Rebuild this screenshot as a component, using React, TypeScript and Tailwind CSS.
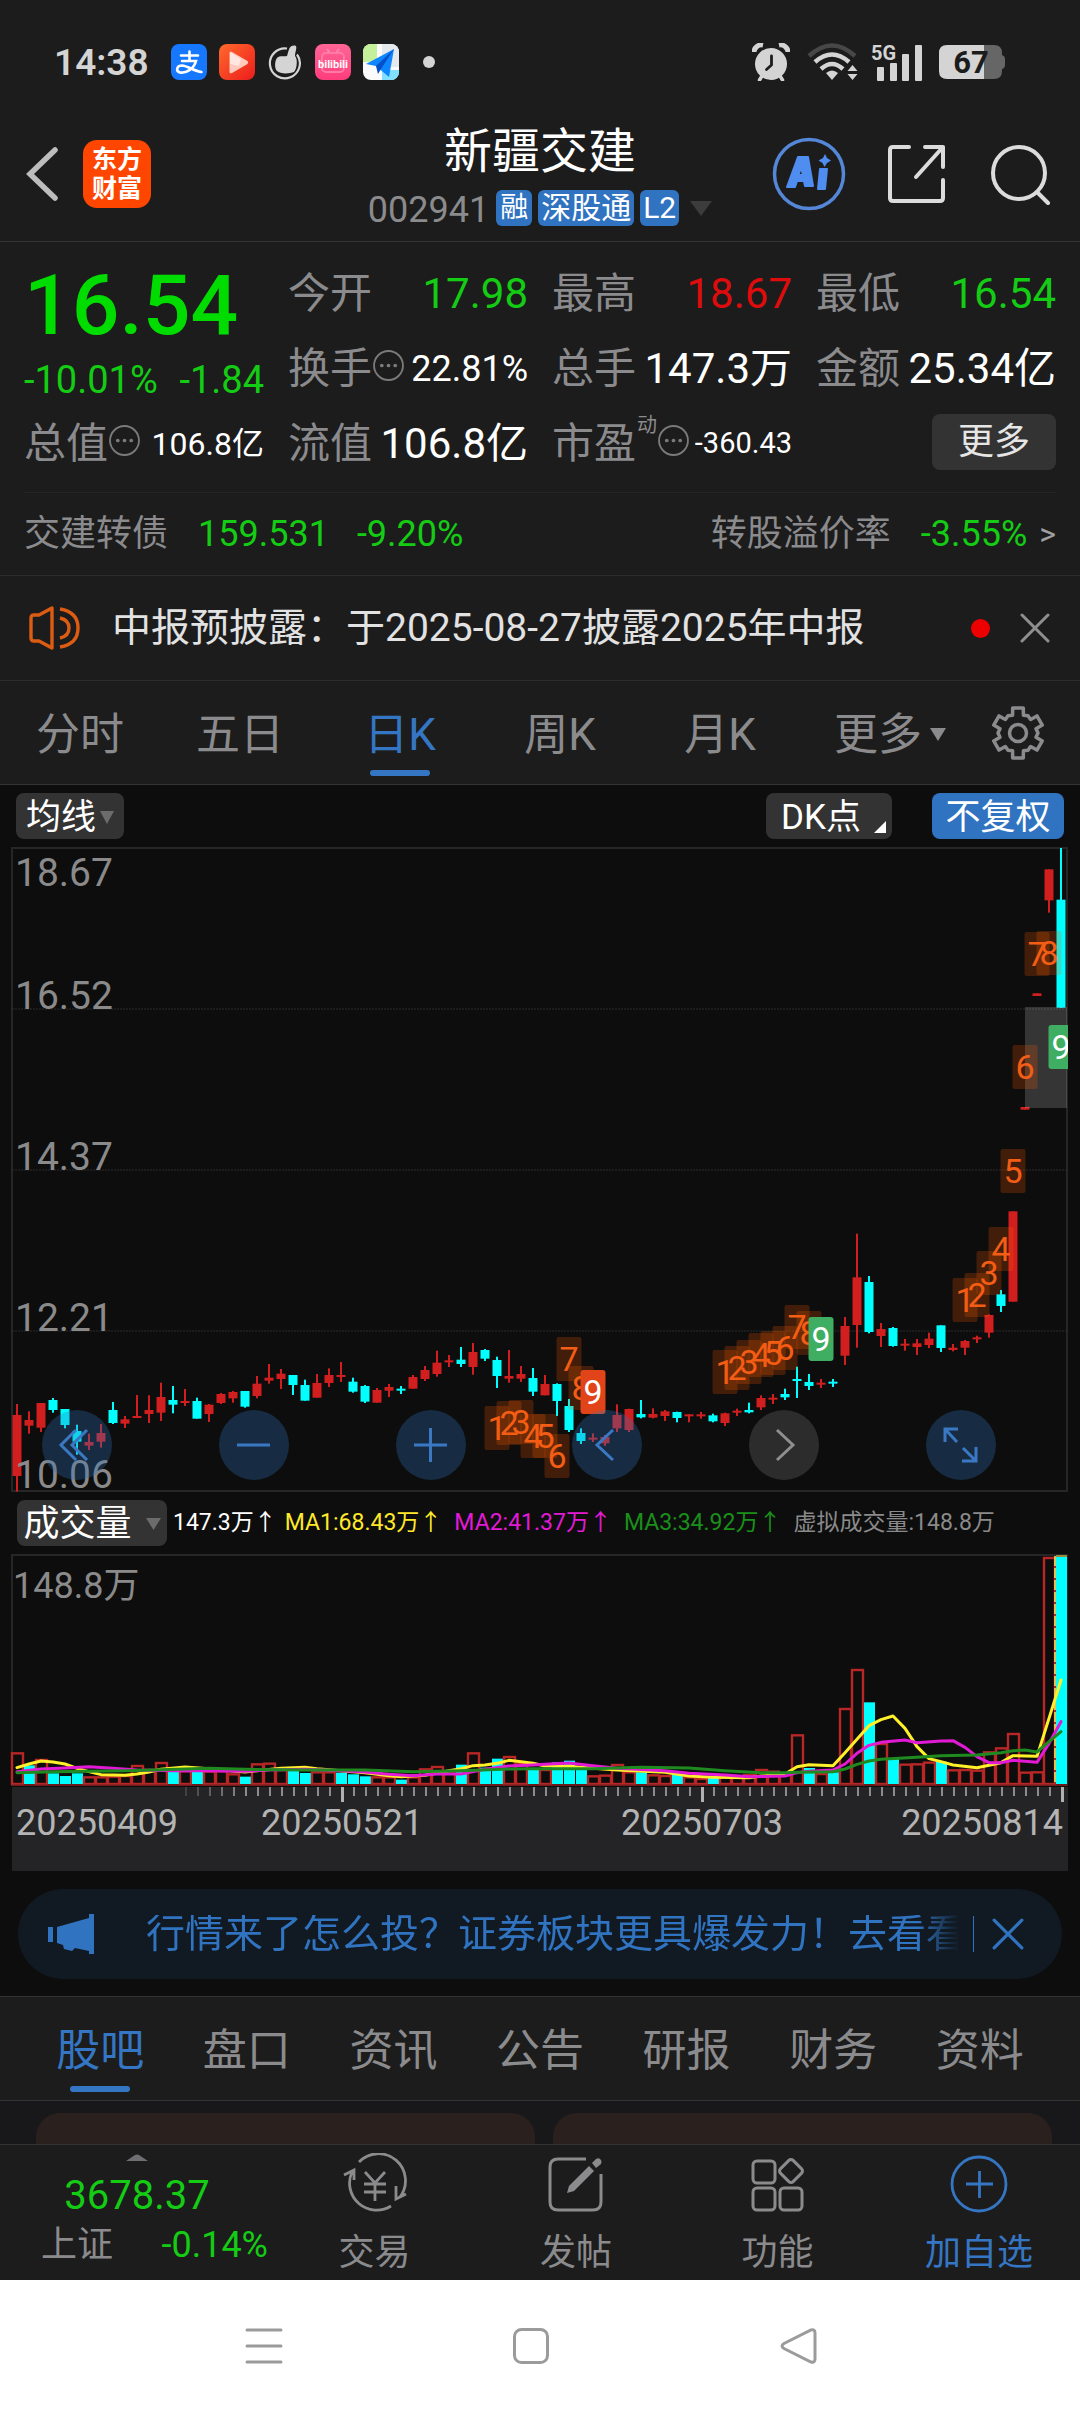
import React from "react";

/* ---------- chart data ---------- */

type Candle = { up: boolean; high: number; top: number; bottom: number; low: number };

const X0 = 17;
const STEP = 12;
const cx = (i: number) => X0 + STEP * i;

// direction, high, body top, body bottom, low, in thirds of a unit below the base line
type Row = [string, number, number, number, number];

const firstHalf: Row[] = [
  ["r", 372, 405, 588, 635], ["r", 394, 420, 437, 461], ["r", 369, 369, 443, 456], ["c", 354, 360, 390, 398],
  ["c", 387, 387, 435, 445], ["c", 434, 453, 485, 524], ["r", 461, 486, 497, 510], ["r", 432, 459, 485, 503],
  ["c", 366, 390, 429, 432], ["r", 408, 418, 431, 444], ["r", 345, 408, 414, 414], ["r", 346, 390, 402, 429],
  ["r", 308, 351, 398, 423], ["c", 318, 360, 374, 400], ["r", 327, 363, 369, 378], ["c", 353, 363, 416, 416],
  ["r", 372, 374, 402, 426], ["r", 339, 342, 369, 372], ["r", 333, 336, 355, 368], ["c", 333, 333, 380, 383],
  ["r", 288, 311, 348, 355], ["r", 252, 293, 302, 311], ["r", 267, 281, 297, 327], ["c", 285, 285, 315, 345],
  ["c", 299, 315, 362, 362], ["r", 282, 309, 353, 353], ["r", 265, 285, 309, 321], ["r", 246, 285, 291, 306],
  ["c", 293, 305, 335, 338], ["c", 315, 318, 365, 369], ["r", 324, 330, 368, 368], ["r", 312, 321, 332, 351],
  ["c", 318, 326, 332, 342], ["r", 285, 291, 326, 326], ["r", 258, 270, 297, 303], ["r", 212, 248, 282, 290],
  ["r", 225, 241, 247, 261], ["c", 201, 239, 252, 261], ["r", 189, 216, 261, 284], ["c", 207, 210, 236, 243],
  ["c", 230, 240, 288, 324], ["r", 210, 288, 296, 308], ["r", 258, 282, 296, 306], ["c", 264, 294, 335, 348],
];

const secondHalf: Row[] = [
  ["r", 525, 552, 586, 586], ["c", 550, 552, 603, 648], ["c", 597, 618, 690, 696], ["c", 685, 699, 723, 732],
  ["r", 700, 713, 719, 726], ["r", 705, 711, 730, 738], ["r", 613, 645, 685, 696], ["r", 626, 627, 690, 696],
  ["c", 600, 642, 652, 655], ["r", 625, 642, 653, 655], ["r", 630, 634, 648, 663], ["c", 635, 636, 654, 667],
  ["r", 643, 643, 649, 667], ["r", 636, 643, 649, 656], ["c", 641, 646, 664, 667], ["r", 638, 640, 669, 678],
  ["r", 626, 632, 638, 648], ["c", 608, 630, 637, 640], ["r", 586, 594, 622, 630], ["r", 582, 593, 599, 612],
  ["c", 566, 582, 592, 600], ["c", 500, 537, 543, 594], ["c", 522, 546, 558, 570], ["r", 537, 548, 554, 564],
  ["c", 537, 545, 551, 561], ["r", 351, 378, 467, 495], ["r", 101, 232, 375, 443], ["c", 228, 246, 396, 400],
  ["r", 369, 387, 408, 441], ["c", 381, 384, 438, 440], ["r", 417, 431, 437, 452], ["r", 417, 430, 441, 465],
  ["r", 398, 416, 435, 444], ["c", 376, 376, 444, 456], ["r", 432, 443, 450, 454], ["r", 420, 423, 443, 465],
  ["r", 407, 412, 418, 429], ["r", 343, 345, 398, 413], ["c", 270, 283, 318, 336], ["r", 34, 34, 305, 305],
  ["r", -279, -279, -271, -271], ["r", -620, -620, -612, -612], ["r", -992, -992, -899, -862], ["c", -1056, -901, -577, -577],
];

const toCandle = (base: number) => (r: Row): Candle => ({
  up: r[0] === "r",
  high: base + r[1] / 3,
  top: base + r[2] / 3,
  bottom: base + r[3] / 3,
  low: base + r[4] / 3,
});

const candles: Candle[] = [...firstHalf.map(toCandle(1280)), ...secondHalf.map(toCandle(1200))];

// [candle index, digit, top of the tag]
const marks: [number, string, number][] = [
  [40, "1", 1406], [41, "2", 1401], [42, "3", 1400], [43, "4", 1414], [44, "5", 1414], [45, "6", 1434],
  [46, "7", 1337], [47, "8", 1366],
  [59, "1", 1350], [60, "2", 1346], [61, "3", 1340], [62, "4", 1333], [63, "5", 1331], [64, "6", 1326],
  [65, "7", 1305], [66, "8", 1311],
  [79, "1", 1278], [80, "2", 1273], [81, "3", 1251], [82, "4", 1227], [83, "5", 1149], [84, "6", 1045],
  [85, "7", 932], [86, "8", 931],
];

const nines: [number, number, string][] = [
  [48, 1370, "#e14418"],
  [67, 1317, "#3fae62"],
  [87, 1025, "#3fae62"],
];

const volumes =
  "r640 c676 r660 c700 c708 c700 r712 r712 r710 r708 r678 r690 r669 c690 r694 c690 r695 r694 r703 c710 r673 r671 r690 c690 c699 r697 r697 c698 c703 c709 r712 r712 c719 r712 r688 r681 r697 c674 r640 c683 c656 r651 r672 c684 r690 c667 c662 c690 r709 r707 r675 r697 c697 r706 r708 c705 r712 r717 c712 r712 r710 r705 r690 r695 r705 r586 c684 r702 c697 r507 r390 c487 r612 c657 r674 r673 r668 c665 r691 r690 r692 r637 r625 r582 r698 r697 r54 c50"
    .split(" ")
    .map((v) => ({ up: v[0] === "r", y: 1540 + Number(v.slice(1)) / 3 }));

// index:value pairs of the moving averages
const ma1 =
  "0:683 1:672 2:663 3:666 4:672 5:685 6:695 7:704 9:706 10:702 11:696 12:688 14:681 16:686 17:690 19:696 20:692 22:685 24:682 25:686 27:692 29:698 31:707 32:710 34:706 36:692 37:686 38:677 39:675 40:670 41:661 42:665 43:670 44:678 46:679 48:685 50:690 54:697 56:708 58:712 61:713 62:708 64:702 65:680 66:674 68:677 69:638 70:598 71:557 72:539 73:528 74:565 75:620 76:656 77:665 78:675 80:683 82:668 83:647 85:649 86:535 87:420";
const ma2 =
  "0:695 2:687 4:684 6:680 8:685 10:690 13:692 16:692 19:694 21:690 24:688 27:692 29:696 31:703 33:707 35:702 37:702 39:688 41:678 43:675 44:673 46:669 48:677 50:685 54:692 56:700 59:705 61:710 64:708 65:698 66:694 68:690 69:672 70:640 71:616 72:607 74:600 75:608 77:603 78:602 79:622 80:650 81:668 82:668 83:661 85:667 86:610 87:545";
const ma3 =
  "0:698 3:695 6:694 9:692 12:689 16:685 19:688 24:690 29:690 33:695 37:692 41:687 43:686 44:686 48:686 52:682 56:684 59:692 62:698 64:698 65:697 68:695 69:687 70:673 71:663 72:658 75:652 77:647 80:645 82:638 83:632 84:630 85:636 86:605 87:575";

const toPoints = (s: string) =>
  s
    .split(" ")
    .map((p) => p.split(":").map(Number))
    .map(([i, y]) => `${cx(i)},${1540 + y / 3}`)
    .join(" ");

const RED = "#d11f1f";
const CYAN = "#00ffff";

/* ---------- charts ---------- */

function PriceChart() {
  const labels: [string, number][] = [
    ["18.67", 886], ["16.52", 1009], ["14.37", 1170], ["12.21", 1331], ["10.06", 1488],
  ];
  return (
    <svg viewBox="0 845 1080 650" className="block w-full" role="img" aria-label="日K线图">
      <defs>
        <clipPath id="plot"><rect x="12" y="847" width="1056" height="645" /></clipPath>
      </defs>
      <rect x="12" y="848" width="1055" height="643" fill="none" stroke="#262626" strokeWidth="2" />
      {[1009, 1170, 1331].map((y) => (
        <line key={y} x1="12" x2="1067" y1={y} y2={y} stroke="#2c2c2c" strokeWidth="1" strokeDasharray="2 1" />
      ))}
      <g clipPath="url(#plot)">
        {candles.map((c, i) => (
          <g key={i} fill={c.up ? RED : CYAN}>
            <rect x={cx(i) - 1} y={c.high} width="2" height={Math.max(1, c.low - c.high)} />
            <rect x={cx(i) - 4.5} y={c.top} width="9" height={Math.max(2, c.bottom - c.top)} />
          </g>
        ))}
        <rect x="1025" y="1007" width="42" height="101" fill="#ffffff" fillOpacity="0.17" />
        <g fontFamily="Roboto" fontSize="34" textAnchor="middle">
          {marks.map(([i, d, y]) => (
            <g key={i}>
              <rect x={cx(i) - 12.5} y={y} width="25" height="44" rx="2" fill="#ff5a00" fillOpacity="0.22" />
              <text x={cx(i)} y={y + 34} fill="#f45d16">{d}</text>
            </g>
          ))}
          {nines.map(([i, y, color]) => (
            <g key={i}>
              <rect x={cx(i) - 12.5} y={y} width="25" height="44" rx="3" fill={color} />
              <text x={cx(i)} y={y + 34} fill="#ffffff">9</text>
            </g>
          ))}
        </g>
      </g>
      <g fontFamily="Roboto" fontSize="39" fill="#8a8a8a">
        {labels.map(([t, y]) => <text key={t} x="15" y={y}>{t}</text>)}
      </g>
    </svg>
  );
}

function VolumeChart() {
  const ticks = Array.from({ length: 74 }, (_, k) => k + 14);
  return (
    <svg viewBox="0 1550 1080 325" className="block w-full" role="img" aria-label="成交量图">
      <path d="M12 1786V1555H1067V1786" fill="none" stroke="#262626" strokeWidth="2" />
      <rect x="12" y="1787" width="1056" height="84" fill="#242426" />
      {volumes.map((v, i) =>
        v.up ? (
          <rect key={i} x={cx(i) - 5} y={v.y} width="11" height={1784 - v.y} fill="none" stroke="#b82626" strokeWidth="2.4" />
        ) : (
          <rect key={i} x={cx(i) - 5} y={v.y} width="11" height={1784 - v.y} fill={CYAN} />
        )
      )}
      <line x1="12" x2="1067" y1="1785" y2="1785" stroke="#8a2222" strokeWidth="1.5" />
      <line x1="1055" x2="1055" y1="1556" y2="1784" stroke="#f2f26a" strokeWidth="1.5" strokeDasharray="10 2" />
      <line x1="1056" x2="1067" y1="1556" y2="1556" stroke="#9a8a3a" strokeWidth="2" />
      <g fill="none" strokeWidth="3" strokeLinejoin="round" strokeLinecap="round">
        <polyline points={toPoints(ma1)} stroke="#fff02a" />
        <polyline points={toPoints(ma2)} stroke="#e21ad6" />
        <polyline points={toPoints(ma3)} stroke="#1f8a1f" />
      </g>
      {ticks.map((i) => {
        const major = i === 27 || i === 57 || i === 87;
        return (
          <rect key={i} x={cx(i)} y="1787" width={major ? 3 : 2} height={major ? 15 : 9} fill={major ? "#b0b0b0" : "#8c8c8c"} opacity={Math.min(1, (i - 12) / 7)} />
        );
      })}
      <g fontFamily='Roboto, "Noto Sans CJK SC", sans-serif' fontSize="36">
        <text x="13" y="1598" fill="#8a8a8a">148.8万</text>
        <g fill="#b4b4b4">
          <text x="16" y="1835">20250409</text>
          <text x="342" y="1835" textAnchor="middle">20250521</text>
          <text x="702" y="1835" textAnchor="middle">20250703</text>
          <text x="1063" y="1835" textAnchor="end">20250814</text>
        </g>
      </g>
    </svg>
  );
}

/* ---------- small pieces ---------- */

function Caret({ className }: { className: string }) {
  return (
    <svg viewBox="0 0 16 12" preserveAspectRatio="none" className={className} fill="currentColor" aria-hidden="true">
      <path d="M0 0H16L8 12Z" />
    </svg>
  );
}

function Info() {
  return (
    <svg viewBox="0 0 30 30" className="mb-[6px] h-[31px] w-[31px] shrink-0" aria-hidden="true">
      <circle cx="15" cy="15" r="14" fill="none" stroke="#7a7a7a" strokeWidth="1.8" />
      <circle cx="8.5" cy="15" r="1.8" fill="#7a7a7a" />
      <circle cx="15" cy="15" r="1.8" fill="#7a7a7a" />
      <circle cx="21.5" cy="15" r="1.8" fill="#7a7a7a" />
    </svg>
  );
}

function Cross({ className }: { className: string }) {
  return (
    <svg viewBox="0 0 30 30" className={className} fill="none" stroke="currentColor" strokeWidth="3" strokeLinecap="round" aria-hidden="true">
      <path d="M2 2L28 28M28 2L2 28" />
    </svg>
  );
}

function Stat({ label, value, color, size, info, sup }: { label: string; value: string; color: string; size: string; info?: boolean; sup?: string }) {
  return (
    <div className="flex h-[75px] items-center whitespace-nowrap">
      <span className="text-[42px] text-[#8b8b8e]">{label}</span>
      {sup && <span className="mb-[38px] ml-px text-[20px] text-[#8b8b8e]">{sup}</span>}
      {info && <span className="ml-px flex"><Info /></span>}
      <span className={`ml-auto ${size} ${color}`}>{value}</span>
    </div>
  );
}

const gearPath = (() => {
  const pts: string[] = [];
  for (let k = 0; k < 6; k++) {
    const a = -90 + k * 60;
    const steps: [number, number][] = [[-17, 18.5], [-12, 25.5], [12, 25.5], [17, 18.5], [30, 20]];
    for (const [d, r] of steps) {
      const t = ((a + d) * Math.PI) / 180;
      pts.push(`${(27 + r * Math.cos(t)).toFixed(2)} ${(27 + r * Math.sin(t)).toFixed(2)}`);
    }
  }
  return `M${pts.join("L")}Z`;
})();

/* ---------- sections ---------- */

function StatusBar() {
  return (
    <div className="flex h-[124px] items-center pl-[54px] pr-[74px]">
      <span className="w-[117px] text-[37px] font-semibold text-[#d4d4d4]">14:38</span>
      <div className="flex items-center gap-3">
        <span className="flex h-9 w-9 items-center justify-center rounded-lg bg-[#1677ff]">
          <svg viewBox="0 0 36 36" className="h-9 w-9" fill="none" stroke="#fff" strokeWidth="2.6" strokeLinecap="round" aria-hidden="true">
            <path d="M10 11.5H27M18.500 7.500V16.500M11 17H25C23 25 15 29.500 9 28.500C4.500 27 5.500 21.500 11 21.500C17 22 23 27 30.500 28" />
          </svg>
        </span>
        <svg viewBox="0 0 36 36" className="h-9 w-9" aria-hidden="true">
          <defs>
            <linearGradient id="play" x1="0" y1="0" x2="1" y2="1">
              <stop offset="0" stopColor="#ff6a2c" /><stop offset="1" stopColor="#ec1c1c" />
            </linearGradient>
          </defs>
          <rect width="36" height="36" rx="8" fill="url(#play)" />
          <path d="M10.500 9Q10.500 6.500 13 8L28.500 17Q30 18.500 28.500 20L13 29Q10.500 30 10.500 28Z" fill="#ffc9bd" />
          <path d="M11 8L22 15L20 22L11 20Z" fill="#ffe6e0" />
        </svg>
        <svg viewBox="0 0 36 36" className="h-9 w-9" aria-hidden="true">
          <path d="M20 4.500A15 15 0 1 0 30 10.500" fill="none" stroke="#d4d4d4" strokeWidth="2.2" />
          <path d="M20 12C22 6 22 1 28 1.500C31 2 28 8 28 12C31 15 30 25 27 28C22 30 13 30 10 27C7 24 8 16 10 14C13 11 17 13 20 12Z" fill="#d4d4d4" />
        </svg>
        <svg viewBox="0 0 36 36" className="h-9 w-9" aria-hidden="true">
          <defs>
            <linearGradient id="tv" x1="0" y1="0" x2="0" y2="1">
              <stop offset="0" stopColor="#ff6597" /><stop offset="1" stopColor="#ff3d7c" />
            </linearGradient>
          </defs>
          <rect width="36" height="36" rx="8" fill="url(#tv)" />
          <path d="M12 5L15 9M24 5L21 9" stroke="#ff88ae" strokeWidth="2" />
          <rect x="7" y="9" width="22" height="19" rx="4" fill="none" stroke="#ff7aa5" strokeWidth="2" />
          <text x="18" y="24" textAnchor="middle" fontFamily="Roboto" fontWeight="700" fontSize="11" fill="#fff">bilibili</text>
        </svg>
        <svg viewBox="0 0 36 36" className="h-9 w-9" aria-hidden="true">
          <defs><clipPath id="map"><rect width="36" height="36" rx="8" /></clipPath></defs>
          <g clipPath="url(#map)">
            <rect width="36" height="36" fill="#fbfbfb" />
            <rect width="14" height="18" fill="#c5f09a" />
            <rect x="19" width="17" height="23" fill="#e3e9ec" />
            <rect x="19" y="26" width="17" height="10" fill="#7fe0ff" />
          </g>
          <path d="M31 5L3 20L13 22L26 33Z" fill="#0d86ff" />
          <path d="M31 5L13 22L15 30L18 25Z" fill="#0450c8" />
        </svg>
      </div>
      <span className="ml-6 h-3 w-3 rounded-full bg-[#d4d4d4]" />
      <div className="ml-auto flex items-center">
        <svg viewBox="0 0 38 38" className="h-[38px] w-[38px]" aria-hidden="true">
          <path d="M2 9A7.500 7.500 0 0 1 11 2M27 2A7.500 7.500 0 0 1 36 9" stroke="#d4d4d4" strokeWidth="5" fill="none" />
          <path d="M10 33L7.500 37M28 33L30.500 37" stroke="#d4d4d4" strokeWidth="3.500" strokeLinecap="round" />
          <circle cx="19" cy="21" r="16" fill="#d4d4d4" />
          <path d="M19.500 13V22L14.500 26.500" stroke="#1c1c1c" strokeWidth="2.800" fill="none" strokeLinecap="round" />
        </svg>
        <svg viewBox="0 0 52 38" className="ml-[17px] h-[38px] w-[52px]" fill="none" strokeWidth="4.500" aria-hidden="true">
          <path d="M2 13Q25 -8 48 13" stroke="#474747" />
          <path d="M8 19Q25 4 42 19" stroke="#d4d4d4" />
          <path d="M14 26Q25 16 36 26" stroke="#d4d4d4" />
          <path d="M25 37L19 30Q25 25 31 30Z" fill="#d4d4d4" />
          <path d="M45.500 22L50.500 28H40.500ZM45.500 37L50.500 31H40.500Z" fill="#d4d4d4" />
        </svg>
        <svg viewBox="0 0 54 40" className="ml-[12px] h-10 w-[54px]" fill="#d4d4d4" aria-hidden="true">
          <text x="0" y="18" fontFamily="Roboto" fontWeight="700" fontSize="20">5G</text>
          <rect x="6" y="25" width="7" height="14" rx="1" />
          <rect x="19" y="21" width="7" height="18" rx="1" />
          <rect x="31" y="12" width="7" height="27" rx="1" />
          <rect x="44" y="3" width="7" height="36" rx="1" />
        </svg>
        <svg viewBox="0 0 67 34" className="ml-[14px] h-[34px] w-[67px]" aria-hidden="true">
          <path d="M8 0H45V34H8Q0 34 0 26V8Q0 0 8 0Z" fill="#d4d4d4" />
          <path d="M45 0H55Q63 0 63 8V10Q66 11 66 14V20Q66 23 63 24V26Q63 34 55 34H45Z" fill="#666" />
          <text x="32" y="28" textAnchor="middle" fontFamily="Roboto" fontWeight="700" fontSize="31" fill="#1c1c1c">67</text>
        </svg>
      </div>
    </div>
  );
}

function Header() {
  return (
    <header className="grid h-[118px] grid-cols-[1fr_auto_1fr] items-start border-b border-[#333]">
      <div className="flex h-[100px] items-center pl-[26px]">
        <button aria-label="返回">
          <svg viewBox="0 0 33 56" className="h-14 w-[33px]" fill="none" stroke="#bdbdbd" strokeWidth="5.500" strokeLinecap="round">
            <path d="M29 4L4 28L29 52" />
          </svg>
        </button>
        <a href="#home" className="ml-6 flex h-[68px] w-[68px] flex-col items-center justify-center rounded-[14px] bg-[#ff4600] text-[25px] font-bold leading-[29px] text-white">
          <span>东方</span>
          <span>财富</span>
        </a>
      </div>
      <div className="flex flex-col items-center">
        <h1 className="mt-px text-[48px] leading-[54px] text-white">新疆交建</h1>
        <div className="mt-[9px] flex h-10 items-center">
          <span className="pt-[3px] text-[36px] text-[#8b8b8e]">002941</span>
          <span className="ml-[7px] flex h-9 items-center rounded-md bg-[#3073c0] px-1 text-[28px] text-white">融</span>
          <span className="ml-[6px] flex h-9 items-center rounded-md bg-[#3073c0] px-[3px] text-[30px] text-white">深股通</span>
          <span className="ml-[6px] flex h-9 items-center rounded-md bg-[#3073c0] px-[3px] text-[30px] text-white">L2</span>
          <Caret className="ml-[11px] h-[15px] w-[22px] text-[#3c3c3c]" />
        </div>
      </div>
      <div className="flex h-[100px] items-center justify-end pr-[28px]">
        <button aria-label="AI">
          <svg viewBox="0 0 74 74" className="h-[74px] w-[74px]">
            <circle cx="37" cy="37" r="34.500" fill="none" stroke="#5587d8" strokeWidth="3.500" />
            <path d="M26 20H36L41 49H33L32 44H25L23 50H15ZM29 30L26.500 38H31Z" fill="#4f8df0" stroke="#4f8df0" strokeWidth="2" strokeLinejoin="round" fillRule="evenodd" />
            <path d="M48 32H55L53 52H46Z" fill="#4f8df0" stroke="#4f8df0" strokeWidth="2" strokeLinejoin="round" />
            <path d="M53 17L55 21L59 23.500L55 26L52.500 30L50.500 26L46.500 23.500L51 21Z" fill="#4f8df0" />
          </svg>
        </button>
        <button aria-label="分享" className="ml-[41px]">
          <svg viewBox="0 0 60 62" className="h-[62px] w-[60px]" fill="none" stroke="#dcdcdc" strokeWidth="4" strokeLinecap="round" strokeLinejoin="round">
            <path d="M22 4H6Q3 4 3 7V55Q3 58 6 58H53Q56 58 56 55V37M38 4H56V24M56 4L29 34" />
          </svg>
        </button>
        <button aria-label="搜索" className="ml-[43px]">
          <svg viewBox="0 0 62 62" className="h-[62px] w-[62px]" fill="none" stroke="#dcdcdc" strokeWidth="4" strokeLinecap="round">
            <circle cx="29" cy="30" r="26" />
            <path d="M47 49L58 60" />
          </svg>
        </button>
      </div>
    </header>
  );
}

function Quote() {
  return (
    <section className="px-6">
      <div className="grid grid-cols-4 gap-x-6 border-b border-[#252525] pb-[11px] pt-[14px]">
        <div className="row-span-2">
          <div className="flex h-[100px] items-center text-[84px] font-medium text-[#00dc00]">16.54</div>
          <div className="flex h-[48px] items-center justify-between whitespace-nowrap text-[38px] text-[#14cc14]">
            <span>-10.01%</span>
            <span>-1.84</span>
          </div>
        </div>
        <Stat label="今开" value="17.98" size="text-[42px]" color="text-[#14cc14]" />
        <Stat label="最高" value="18.67" size="text-[42px]" color="text-[#de0c0c]" />
        <Stat label="最低" value="16.54" size="text-[42px]" color="text-[#14cc14]" />
        <Stat label="换手" value="22.81%" size="text-[36px]" color="text-white" info />
        <Stat label="总手" value="147.3万" size="text-[42px]" color="text-white" />
        <Stat label="金额" value="25.34亿" size="text-[42px]" color="text-white" />
        <Stat label="总值" value="106.8亿" size="text-[32px]" color="text-white" info />
        <Stat label="流值" value="106.8亿" size="text-[42px]" color="text-white" />
        <Stat label="市盈" value="-360.43" size="text-[29px]" color="text-white" info sup="动" />
        <div className="flex h-[71px] items-center justify-end">
          <button className="h-14 w-[124px] rounded-lg bg-[#333] text-[36px] text-[#e6e6e6]">更多</button>
        </div>
      </div>
      <a href="#bond" className="flex h-[82px] items-center whitespace-nowrap text-[36px] text-[#8b8b8e]">
        <span>交建转债</span>
        <span className="ml-[30px] text-[#14cc14]">159.531</span>
        <span className="ml-7 text-[#14cc14]">-9.20%</span>
        <span className="ml-auto">转股溢价率</span>
        <span className="ml-[30px] text-[#14cc14]">-3.55%</span>
        <span className="ml-[12px] text-[32px] text-[#a0a0a0]">&gt;</span>
      </a>
    </section>
  );
}

function Notice() {
  return (
    <section className="flex h-[106px] items-center border-y border-[#2c2c2c] pl-7 pr-[30px]">
      <svg viewBox="0 0 54 44" className="h-11 w-[54px]" fill="none" stroke="#dc5c14" strokeWidth="3.400" strokeLinejoin="round" aria-hidden="true">
        <path d="M6 9H11L24 2V42L11 35H6Q3 35 3 32V12Q3 9 6 9Z" />
        <path d="M32 12Q41 14 41 22Q41 30 32 32M32 3Q50 6 50 22Q50 38 32 41" />
      </svg>
      <p className="ml-[30px] whitespace-nowrap text-[39px] text-[#e2e2e2]">中报预披露：于2025-08-27披露2025年中报</p>
      <span className="ml-auto h-[19px] w-[19px] rounded-full bg-[#ee0000]" />
      <button aria-label="关闭公告" className="ml-[30px] text-[#8f8f8f]"><Cross className="h-[30px] w-[30px]" /></button>
    </section>
  );
}

function PeriodTabs() {
  const tabs = ["分时", "五日", "日K", "周K", "月K"];
  return (
    <nav className="grid h-[104px] grid-cols-[160fr_160fr_160fr_160fr_160fr_180fr_100fr] border-b border-[#333] text-[44px] text-[#8b8b8e]">
      {tabs.map((t) => (
        <button key={t} className={t === "日K" ? "relative pt-1 text-[#3576c4]" : "relative pt-1"}>
          {t}
          {t === "日K" && <span className="absolute bottom-[8px] left-1/2 h-[6px] w-[60px] -translate-x-1/2 rounded-full bg-[#3576c4]" />}
        </button>
      ))}
      <button className="flex items-center justify-center gap-2 pt-1">
        更多<Caret className="h-[13px] w-4" />
      </button>
      <button aria-label="设置" className="flex items-center justify-center pr-6">
        <svg viewBox="0 0 54 54" className="h-[54px] w-[54px]" fill="none" stroke="currentColor" strokeWidth="3.500" strokeLinejoin="round">
          <path d={gearPath} />
          <circle cx="27" cy="27" r="8.500" />
        </svg>
      </button>
    </nav>
  );
}

function ChartControls() {
  const items: [string, string][] = [
    ["最早", "M34 20L19 35L34 50M45 20L30 35L45 50"],
    ["缩小", "M18 35H51"],
    ["放大", "M18 35H51M34.500 18V52"],
    ["向左", "M41 20L25 35L41 50"],
    ["向右", "M28 20L44 35L28 50"],
    ["全屏", "M19 32V19H32M19 19L31 32M37 38L50 51M50 37V51H36"],
  ];
  return (
    <div className="absolute bottom-[15px] left-[42px] right-[84px] flex justify-between">
      {items.map(([name, d]) => (
        <button
          key={name}
          aria-label={name}
          className={
            name === "向右"
              ? "h-[70px] w-[70px] rounded-full bg-[#2c2c2c] text-[#8f8f8f]"
              : "h-[70px] w-[70px] rounded-full bg-[#3073c0]/30 text-[#3a78c4]"
          }
        >
          <svg viewBox="0 0 70 70" className="h-[70px] w-[70px]" fill="none" stroke="currentColor" strokeWidth="3">
            <path d={d} />
          </svg>
        </button>
      ))}
    </div>
  );
}

function Charts() {
  return (
    <section className="bg-[#0d0d0d] pb-[17px]">
      <div className="flex h-[60px] items-center px-4 pt-0.5 text-[35px] text-white">
        <button className="flex h-[46px] w-[108px] items-center justify-center gap-1 rounded-lg bg-[#333] pt-0.5">
          <span className="whitespace-nowrap">均线</span>
          <Caret className="h-[13px] w-[14px] shrink-0 text-[#6c6c6c]" />
        </button>
        <button className="relative ml-auto h-[46px] w-[126px] rounded-lg bg-[#333] pr-4 pt-0.5">
          DK点
          <svg viewBox="0 0 12 12" className="absolute bottom-[6px] right-[6px] h-3 w-3" fill="#fff" aria-hidden="true"><path d="M12 0V12H0Z" /></svg>
        </button>
        <button className="ml-10 h-[46px] w-[132px] rounded-lg bg-[#3073c0] pt-0.5">不复权</button>
      </div>
      <div className="relative">
        <PriceChart />
        <ChartControls />
      </div>
      <div className="flex h-[55px] items-center whitespace-nowrap pl-[17px] text-[23px]">
        <button className="flex h-[46px] w-[150px] items-center justify-center gap-[14px] rounded-lg bg-[#333] pt-0.5 text-[36px] text-white">
          成交量
          <Caret className="h-3 w-[15px] shrink-0 text-[#6c6c6c]" />
        </button>
        <span className="ml-[6px] text-white">147.3万↑</span>
        <span className="ml-[8px] text-[#ffe92a]">MA1:68.43万↑</span>
        <span className="ml-[12px] text-[#e21ad6]">MA2:41.37万↑</span>
        <span className="ml-[12px] text-[#1a8f1a]">MA3:34.92万↑</span>
        <span className="ml-[12px] text-[#8a8a8a]">虚拟成交量:148.8万</span>
      </div>
      <VolumeChart />
      <div className="mx-[18px] mt-[14px] flex h-[90px] items-center rounded-full bg-[#111a23] pl-[30px] pr-[38px] text-[#3073c0]">
        <svg viewBox="0 0 46 40" className="h-10 w-[46px] shrink-0" fill="currentColor" aria-hidden="true">
          <path d="M0 13H5V28H0ZM9 13L41 4V0H46V40H41V37L27 34L24 37L16 35L15 31L9 29Z" />
        </svg>
        <p className="ml-[52px] min-w-0 flex-1 overflow-hidden whitespace-nowrap text-[39px] [mask-image:linear-gradient(to_right,#000_95%,transparent)]">
          行情来了怎么投？证券板块更具爆发力！去看看
        </p>
        <span className="ml-[14px] h-9 w-px bg-[#3073c0]" />
        <button aria-label="关闭推广" className="ml-[18px]"><Cross className="h-8 w-8" /></button>
      </div>
    </section>
  );
}

function InfoTabs() {
  const tabs = ["股吧", "盘口", "资讯", "公告", "研报", "财务", "资料"];
  return (
    <>
      <nav className="grid h-[105px] grid-cols-7 border-y border-[#333] px-[27px] text-[44px] text-[#8b8b8e]">
        {tabs.map((t, i) => (
          <button key={t} className={i === 0 ? "relative pt-1 text-[#3576c4]" : "relative pt-1"}>
            {t}
            {i === 0 && <span className="absolute bottom-[8px] left-1/2 h-[6px] w-[60px] -translate-x-1/2 rounded-full bg-[#3576c4]" />}
          </button>
        ))}
      </nav>
      <div className="grid h-[43px] grid-cols-2 gap-[18px] overflow-hidden bg-[#18181a] pl-[36px] pt-3 pr-[28px]">
        <div className="rounded-t-3xl bg-[#2a211f]" />
        <div className="rounded-t-3xl bg-[#2a211f]" />
      </div>
    </>
  );
}

function BottomBar() {
  const item = "flex flex-col items-center pt-[8px] text-[36px] leading-[48px]";
  return (
    <nav className="grid h-[136px] grid-cols-[274fr_201fr_202fr_201fr_202fr] border-t border-[#333] text-[#8b8b8e]">
      <button className="flex flex-col items-center pt-[9px]">
        <svg viewBox="0 0 22 7" className="h-[7px] w-[22px]" fill="#6f6f72" aria-hidden="true"><path d="M0 7L9 1Q11 0 13 1L22 7Z" /></svg>
        <span className="mt-[11px] text-[40px] leading-[48px] text-[#14cc14]">3678.37</span>
        <span className="flex w-full justify-between pl-[41px] pr-[6px] text-[36px] leading-[50px]">
          <span>上证</span>
          <span className="text-[#14cc14]">-0.14%</span>
        </span>
      </button>
      <button className={item}>
        <svg viewBox="0 0 66 64" className="h-16 w-[66px]" fill="none" stroke="currentColor" strokeWidth="2.800" aria-hidden="true">
          <path d="M17 9A27 27 0 0 1 58 44M54 33V46L64 41M49 53A27 27 0 0 1 10 19M2 22L12 17V27" />
          <path d="M23 19L33 30L43 19M33 30V48M22 31H44M22 39H44" />
        </svg>
        <span className="mt-3">交易</span>
      </button>
      <button className={item}>
        <svg viewBox="0 0 66 64" className="h-16 w-[66px]" fill="none" stroke="currentColor" strokeWidth="3" aria-hidden="true">
          <path d="M43 6H15Q7 6 7 14V49Q7 57 15 57H50Q58 57 58 49V21" />
          <path d="M24 40L26 33L46 13L51 18L31 38Z" fill="currentColor" stroke="none" />
          <path d="M49 10L53 6Q56 4 58 7Q59 9 58 11L53 15Z" fill="currentColor" stroke="none" />
        </svg>
        <span className="mt-3">发帖</span>
      </button>
      <button className={item}>
        <svg viewBox="0 0 66 64" className="h-16 w-[66px]" fill="none" stroke="currentColor" strokeWidth="3" aria-hidden="true">
          <rect x="8" y="8" width="22" height="22" rx="4" />
          <rect x="8" y="35" width="22" height="22" rx="4" />
          <rect x="35" y="35" width="22" height="22" rx="4" />
          <rect x="37" y="9" width="18" height="18" rx="3" transform="rotate(45 46 18)" />
        </svg>
        <span className="mt-3">功能</span>
      </button>
      <button className={`${item} text-[#3576c4]`}>
        <svg viewBox="0 0 66 64" className="h-16 w-[66px]" fill="none" stroke="currentColor" strokeWidth="2.800" aria-hidden="true">
          <circle cx="33" cy="31" r="27" />
          <path d="M20 31H47M33.500 18V45" />
        </svg>
        <span className="mt-3">加自选</span>
      </button>
    </nav>
  );
}

function SystemNav() {
  return (
    <div className="grid h-[132px] grid-cols-3 items-center bg-white pl-[130px] pr-[147px] text-[#9b9b9b]">
      <button aria-label="最近任务" className="flex justify-center">
        <svg viewBox="0 0 40 40" className="h-10 w-10" stroke="currentColor" strokeWidth="3" strokeLinecap="round"><path d="M3 4H37M3 20H37M3 36H37" /></svg>
      </button>
      <button aria-label="主屏幕" className="flex justify-center">
        <svg viewBox="0 0 40 40" className="h-10 w-10" fill="none" stroke="currentColor" strokeWidth="3"><rect x="3.500" y="3.500" width="33" height="33" rx="7" /></svg>
      </button>
      <button aria-label="返回上一级" className="flex justify-center">
        <svg viewBox="0 0 40 40" className="h-10 w-10" fill="none" stroke="currentColor" strokeWidth="3"><path d="M5 17.500L32 4Q36 3 36 7V33Q36 37 32 36L5 22.500Q1 20 5 17.500Z" /></svg>
      </button>
    </div>
  );
}

export default function App() {
  return (
    <main className='w-full bg-[#1c1c1c] font-["Roboto","Noto_Sans_CJK_SC",sans-serif] leading-none'>
      <StatusBar />
      <Header />
      <Quote />
      <Notice />
      <PeriodTabs />
      <Charts />
      <InfoTabs />
      <BottomBar />
      <SystemNav />
    </main>
  );
}
